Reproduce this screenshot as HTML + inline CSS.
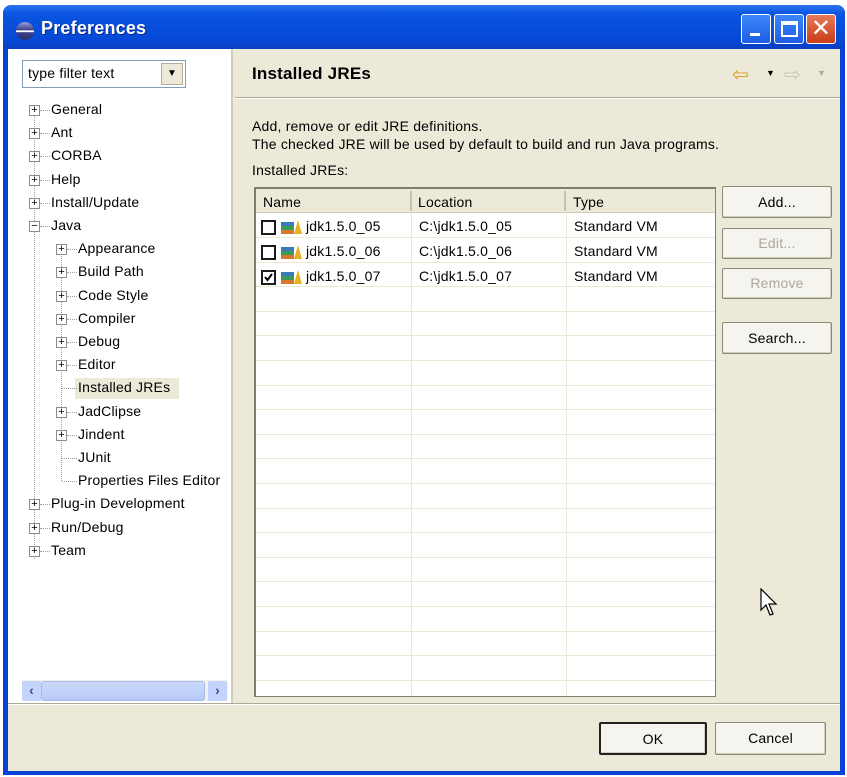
<!DOCTYPE html>
<html><head><style>
*{margin:0;padding:0;box-sizing:border-box}
body{width:847px;height:777px;background:#fff;font-family:"Liberation Sans",sans-serif;font-size:14px;letter-spacing:0.2px;color:#000;position:relative;overflow:hidden}
.a{position:absolute}
.win{left:3px;top:5px;width:842px;height:770px;background:#0842d8;border-radius:8px 8px 0 0}
.title{left:3px;top:5px;width:842px;height:44px;border-radius:8px 8px 0 0;background:linear-gradient(#2b74f0,#0a55e0 20%,#0548d6 80%,#0a3fc0)}
.body{left:8px;top:49px;width:832px;height:722px;background:#ece9d8}
.tb{top:14px;width:30px;height:30px;border:1px solid #fff;border-radius:3px;background:linear-gradient(#3d86f8,#1d5de6)}
.btn{position:absolute;background:#f5f4ee;border:1px solid #8b8978;border-radius:2px;text-align:center;box-shadow:inset -1px -1px 0 #d0cdbd}
.t{position:absolute;white-space:nowrap}
.pb{position:absolute;width:11px;height:11px;border:1px solid #8c8c8c;background:#fff;font-size:11px;line-height:8px;text-align:center;letter-spacing:0}
.dot{position:absolute;border-top:1px dotted #a0a0a0;width:9px}
.row{position:absolute;left:0;width:459px;height:1px;background:#ede9d9}
.col{position:absolute;top:24px;width:1px;height:485px;background:#ede9d9}
.cb{position:absolute;width:15px;height:15px;border:2px solid #1c1c1c;background:#fff}
.ic{position:absolute;width:22px;height:15px}
</style></head><body>
<div class="a win"></div>
<div class="a title"></div>
<div class="a" style="left:16px;top:22px;width:18px;height:18px;border-radius:50%;background:linear-gradient(#9aa0d8,#3a3f8c 45%,#fff 48%,#fff 55%,#3a3f8c 58%,#2b2f70)"></div>
<div class="t" style="left:41px;top:18px;color:#fff;font-weight:bold;font-size:18px;text-shadow:1px 1px 0 #0a2a8a">Preferences</div>
<div class="a tb" style="left:741px"><div class="a" style="left:8px;top:18px;width:10px;height:3px;background:#fff"></div></div>
<div class="a tb" style="left:774px"><div class="a" style="left:6px;top:6px;width:17px;height:16px;border:2px solid #fff;border-top-width:4px"></div></div>
<div class="a tb" style="left:806px;background:linear-gradient(#e87a5a,#c93c18);color:#fff;font-size:24px;text-align:center;line-height:28px">✕</div>
<div class="a body"></div>
<div class="a" style="left:8px;top:49px;width:225px;height:654px;background:#fff;border-right:2px solid #d0cdbd"></div>
<div class="a" style="left:22px;top:60px;width:164px;height:28px;border:1px solid #7f9db9;background:#fff"></div>
<div class="t" style="left:28px;top:65px">type filter text</div>
<div class="a" style="left:161px;top:63px;width:22px;height:22px;background:#ece9d8;border:1px solid #b0ad9c;text-align:center;font-size:10px;line-height:20px">▼</div>
<div class="a" style="left:34px;top:115px;height:444px;border-left:1px dotted #a0a0a0"></div>
<div class="a" style="left:61px;top:254px;height:227px;border-left:1px dotted #a0a0a0"></div>
<div id="tree"></div>
<div class="a" style="left:22px;top:680px;width:206px;height:21px;background:#f2f1ec"></div>
<div class="a" style="left:22px;top:681px;width:19px;height:20px;background:#c4d3fb;border-radius:2px;font-size:14px;text-align:center;color:#3a4e8a;font-weight:bold;line-height:19px">‹</div>
<div class="a" style="left:41px;top:681px;width:164px;height:20px;background:linear-gradient(#cad8fb,#b8cbf8);border:1px solid #a6baf0;border-radius:3px"></div>
<div class="a" style="left:208px;top:681px;width:19px;height:20px;background:#c4d3fb;border-radius:2px;font-size:14px;text-align:center;color:#3a4e8a;font-weight:bold;line-height:19px">›</div>
<div class="t" style="left:252px;top:64px;font-size:17px;font-weight:bold">Installed JREs</div>
<div class="t" style="left:732px;top:62px;color:#e0a020;font-size:20px">⇦</div>
<div class="t" style="left:766px;top:68px;font-size:9px">▼</div>
<div class="t" style="left:784px;top:62px;color:#c8c6b8;font-size:20px">⇨</div>
<div class="t" style="left:817px;top:68px;font-size:9px;color:#aaa">▼</div>
<div class="a" style="left:235px;top:97px;width:605px;height:2px;border-top:1px solid #aca899;border-bottom:1px solid #fff"></div>
<div class="t" style="left:252px;top:118px">Add, remove or edit JRE definitions.</div>
<div class="t" style="left:252px;top:136px">The checked JRE will be used by default to build and run Java programs.</div>
<div class="t" style="left:252px;top:162px">Installed JREs:</div>
<div class="a" style="left:254px;top:187px;width:462px;height:510px;background:#fff;border:1px solid #7f7d70;border-left:2px solid #7f7d70;border-top:2px solid #7f7d70;overflow:hidden">
 <div class="a" style="left:0;top:0;width:460px;height:24px;background:#ece9d8;border-bottom:1px solid #d0cdbd"></div>
 <div class="a" style="left:154px;top:2px;width:2px;height:20px;background:#c5c2b2"></div>
 <div class="a" style="left:308px;top:2px;width:2px;height:20px;background:#c5c2b2"></div>
 <div class="t" style="left:7px;top:5px">Name</div>
 <div class="t" style="left:162px;top:5px">Location</div>
 <div class="t" style="left:317px;top:5px">Type</div>
 <div class="col" style="left:155px"></div><div class="col" style="left:310px"></div>
 <div id="rows"></div>
</div>
<div class="btn" style="left:722px;top:186px;width:110px;height:32px;line-height:30px">Add...</div>
<div class="btn" style="left:722px;top:228px;width:110px;height:31px;line-height:29px;color:#aca899">Edit...</div>
<div class="btn" style="left:722px;top:268px;width:110px;height:31px;line-height:29px;color:#aca899">Remove</div>
<div class="btn" style="left:722px;top:322px;width:110px;height:32px;line-height:30px">Search...</div>
<svg class="a" style="left:760px;top:588px" width="20" height="30" viewBox="0 0 20 30"><path d="M1 1 L1 22 L6 17 L10 27 L13 26 L9 16 L16 16 Z" fill="#fff" stroke="#000" stroke-width="1.2"/></svg>
<div class="a" style="left:8px;top:703px;width:832px;height:2px;border-top:1px solid #aca899;border-bottom:1px solid #fff"></div>
<div class="btn" style="left:599px;top:722px;width:108px;height:33px;line-height:31px;border:2px solid #222">OK</div>
<div class="btn" style="left:715px;top:722px;width:111px;height:33px;line-height:31px">Cancel</div>
<script>
var items=[[0,'General','+'],[0,'Ant','+'],[0,'CORBA','+'],[0,'Help','+'],[0,'Install/Update','+'],[0,'Java','−'],[1,'Appearance','+'],[1,'Build Path','+'],[1,'Code Style','+'],[1,'Compiler','+'],[1,'Debug','+'],[1,'Editor','+'],[1,'Installed JREs',''],[1,'JadClipse','+'],[1,'Jindent','+'],[1,'JUnit',''],[1,'Properties Files Editor',''],[0,'Plug-in Development','+'],[0,'Run/Debug','+'],[0,'Team','+']];
var h='';items.forEach(function(it,i){var y=101+i*23.2;var bx=it[0]?56:29,tx=it[0]?78:51;
if(it[1]=='Installed JREs')h+='<div class="a" style="left:75px;top:'+(y-1)+'px;width:104px;height:21px;background:#ece9d8"></div>';
if(it[2])h+='<div class="pb" style="left:'+bx+'px;top:'+(y+4)+'px">'+it[2]+'</div><div class="dot" style="left:'+(bx+11)+'px;top:'+(y+9)+'px;width:'+(tx-bx-12)+'px"></div>';
else h+='<div class="dot" style="left:'+(bx+6)+'px;top:'+(y+9)+'px;width:'+(tx-bx-7)+'px"></div>';
h+='<div class="t" style="left:'+tx+'px;top:'+y+'px">'+it[1]+'</div>';});
document.getElementById('tree').innerHTML=h;
var r='';for(var i=0;i<20;i++){r+='<div class="row" style="top:'+(48+i*24.6)+'px"></div>';}
['05','06','07'].forEach(function(n,i){var y=31+i*25;
r+='<div class="cb" style="left:5px;top:'+(y)+'px">'+(i==2?'<svg class="a" style="left:0;top:0" width="11" height="11"><path d="M2 5 L4.5 8 L9 2" fill="none" stroke="#000" stroke-width="2"/></svg>':'')+'</div>';
r+='<div class="ic" style="left:25px;top:'+(y)+'px"><div class="a" style="left:0;top:2px;width:13px;height:4px;background:#3a7ab8"></div><div class="a" style="left:0;top:6px;width:13px;height:4px;background:#3a9a5a"></div><div class="a" style="left:0;top:10px;width:13px;height:4px;background:#d87830"></div><div class="a" style="left:13px;top:0;width:0;height:0;border-left:4px solid transparent;border-right:4px solid transparent;border-bottom:14px solid #e8b020"></div></div>';
r+='<div class="t" style="left:50px;top:'+(y-2)+'px">jdk1.5.0_'+n+'</div><div class="t" style="left:163px;top:'+(y-2)+'px">C:\\jdk1.5.0_'+n+'</div><div class="t" style="left:318px;top:'+(y-2)+'px">Standard VM</div>';});
document.getElementById('rows').innerHTML=r;
</script>
</body></html>
